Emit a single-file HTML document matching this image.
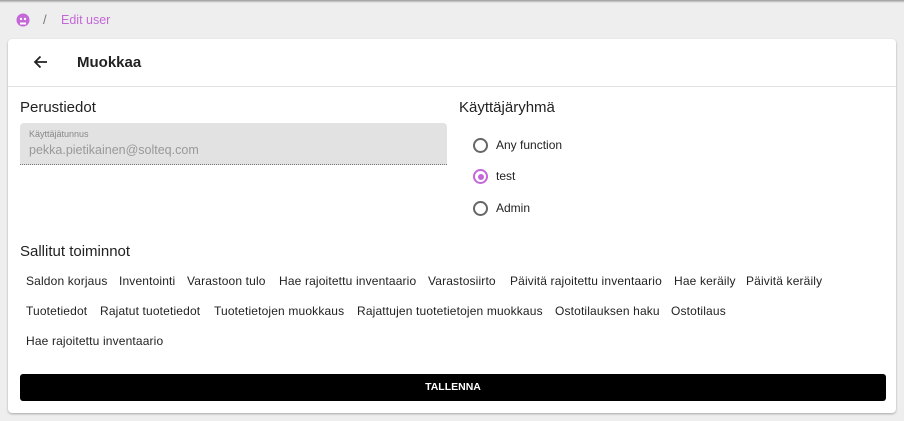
<!DOCTYPE html>
<html><head><meta charset="utf-8"><style>
body{margin:0;width:904px;height:421px;background:#eeeeee;font-family:"Liberation Sans",sans-serif;position:relative;overflow:hidden;color:#222}
.abs{position:absolute;white-space:nowrap}
.topbar{position:absolute;left:0;top:0;width:904px;height:3px;background:linear-gradient(#999,#eee)}
.card{position:absolute;left:8px;top:39px;width:888px;height:374px;background:#fff;border-radius:4px;box-shadow:0 1px 2px rgba(0,0,0,.3)}
.chip{position:absolute;font-size:12px;color:#222;white-space:nowrap;letter-spacing:0.15px}
.radio{position:absolute;width:11px;height:11px;border:2px solid #666;border-radius:50%}
</style></head><body>
<div class="topbar"></div>
<svg class="abs" style="left:16px;top:13px" width="14" height="14" viewBox="0 0 14 14"><circle cx="7" cy="7" r="6.5" fill="#c467d9"/><circle cx="5" cy="6" r="1.2" fill="#fff"/><circle cx="9" cy="6" r="1.2" fill="#fff"/><path d="M4 9.5h6v2H4z" fill="#fff"/></svg>
<div class="abs" style="left:43px;top:12px;font-size:13px;color:#777">/</div>
<div class="abs" style="left:61px;top:13px;font-size:12.5px;color:#c467d9">Edit user</div>
<div class="card">
 <svg class="abs" style="left:25px;top:16px" width="16" height="14" viewBox="0 0 16 14"><path d="M14 7H2M7.5 1.5L2 7l5.5 5.5" fill="none" stroke="#222" stroke-width="1.8"/></svg>
 <div class="abs" style="left:69px;top:15px;font-size:15px;font-weight:bold;color:#222">Muokkaa</div>
 <div class="abs" style="left:0;top:47px;width:888px;height:1px;background:#e0e0e0"></div>
 <div class="abs" style="left:12px;top:60px;font-size:15px">Perustiedot</div>
 <div class="abs" style="left:12px;top:84px;width:427px;height:41px;background:#e2e2e2;border-radius:4px 4px 0 0;border-bottom:1px dotted #777"></div>
 <div class="abs" style="left:21px;top:90px;font-size:9px;color:#888">Käyttäjätunnus</div>
 <div class="abs" style="left:21px;top:104px;font-size:12.5px;color:#999">pekka.pietikainen@solteq.com</div>
 <div class="abs" style="left:451px;top:60px;font-size:15px">Käyttäjäryhmä</div>
 <div class="radio" style="left:465px;top:99px"></div>
 <div class="abs" style="left:488px;top:99px;font-size:12px">Any function</div>
 <div class="radio" style="left:465px;top:130px;border-color:#c467d9"><div style="position:absolute;left:2.5px;top:2.5px;width:6px;height:6px;border-radius:50%;background:#c467d9"></div></div>
 <div class="abs" style="left:488px;top:130px;font-size:12px">test</div>
 <div class="radio" style="left:465px;top:162px"></div>
 <div class="abs" style="left:488px;top:162px;font-size:12px">Admin</div>
 <div class="abs" style="left:12px;top:204px;font-size:15px">Sallitut toiminnot</div>
 <div class="chip" style="left:18px;top:235px">Saldon korjaus</div>
 <div class="chip" style="left:111px;top:235px">Inventointi</div>
 <div class="chip" style="left:179px;top:235px">Varastoon tulo</div>
 <div class="chip" style="left:271px;top:235px">Hae rajoitettu inventaario</div>
 <div class="chip" style="left:420px;top:235px">Varastosiirto</div>
 <div class="chip" style="left:502px;top:235px">Päivitä rajoitettu inventaario</div>
 <div class="chip" style="left:666px;top:235px">Hae keräily</div>
 <div class="chip" style="left:738px;top:235px">Päivitä keräily</div>
 <div class="chip" style="left:18px;top:265px">Tuotetiedot</div>
 <div class="chip" style="left:92px;top:265px">Rajatut tuotetiedot</div>
 <div class="chip" style="left:206px;top:265px">Tuotetietojen muokkaus</div>
 <div class="chip" style="left:349px;top:265px">Rajattujen tuotetietojen muokkaus</div>
 <div class="chip" style="left:547px;top:265px">Ostotilauksen haku</div>
 <div class="chip" style="left:663px;top:265px">Ostotilaus</div>
 <div class="chip" style="left:18px;top:295px">Hae rajoitettu inventaario</div>
 <div class="abs" style="left:12px;top:335px;width:866px;height:27px;background:#000;border-radius:3px;color:#fff;font-size:10.5px;font-weight:bold;text-align:center;line-height:27px">TALLENNA</div>
</div>
</body></html>
